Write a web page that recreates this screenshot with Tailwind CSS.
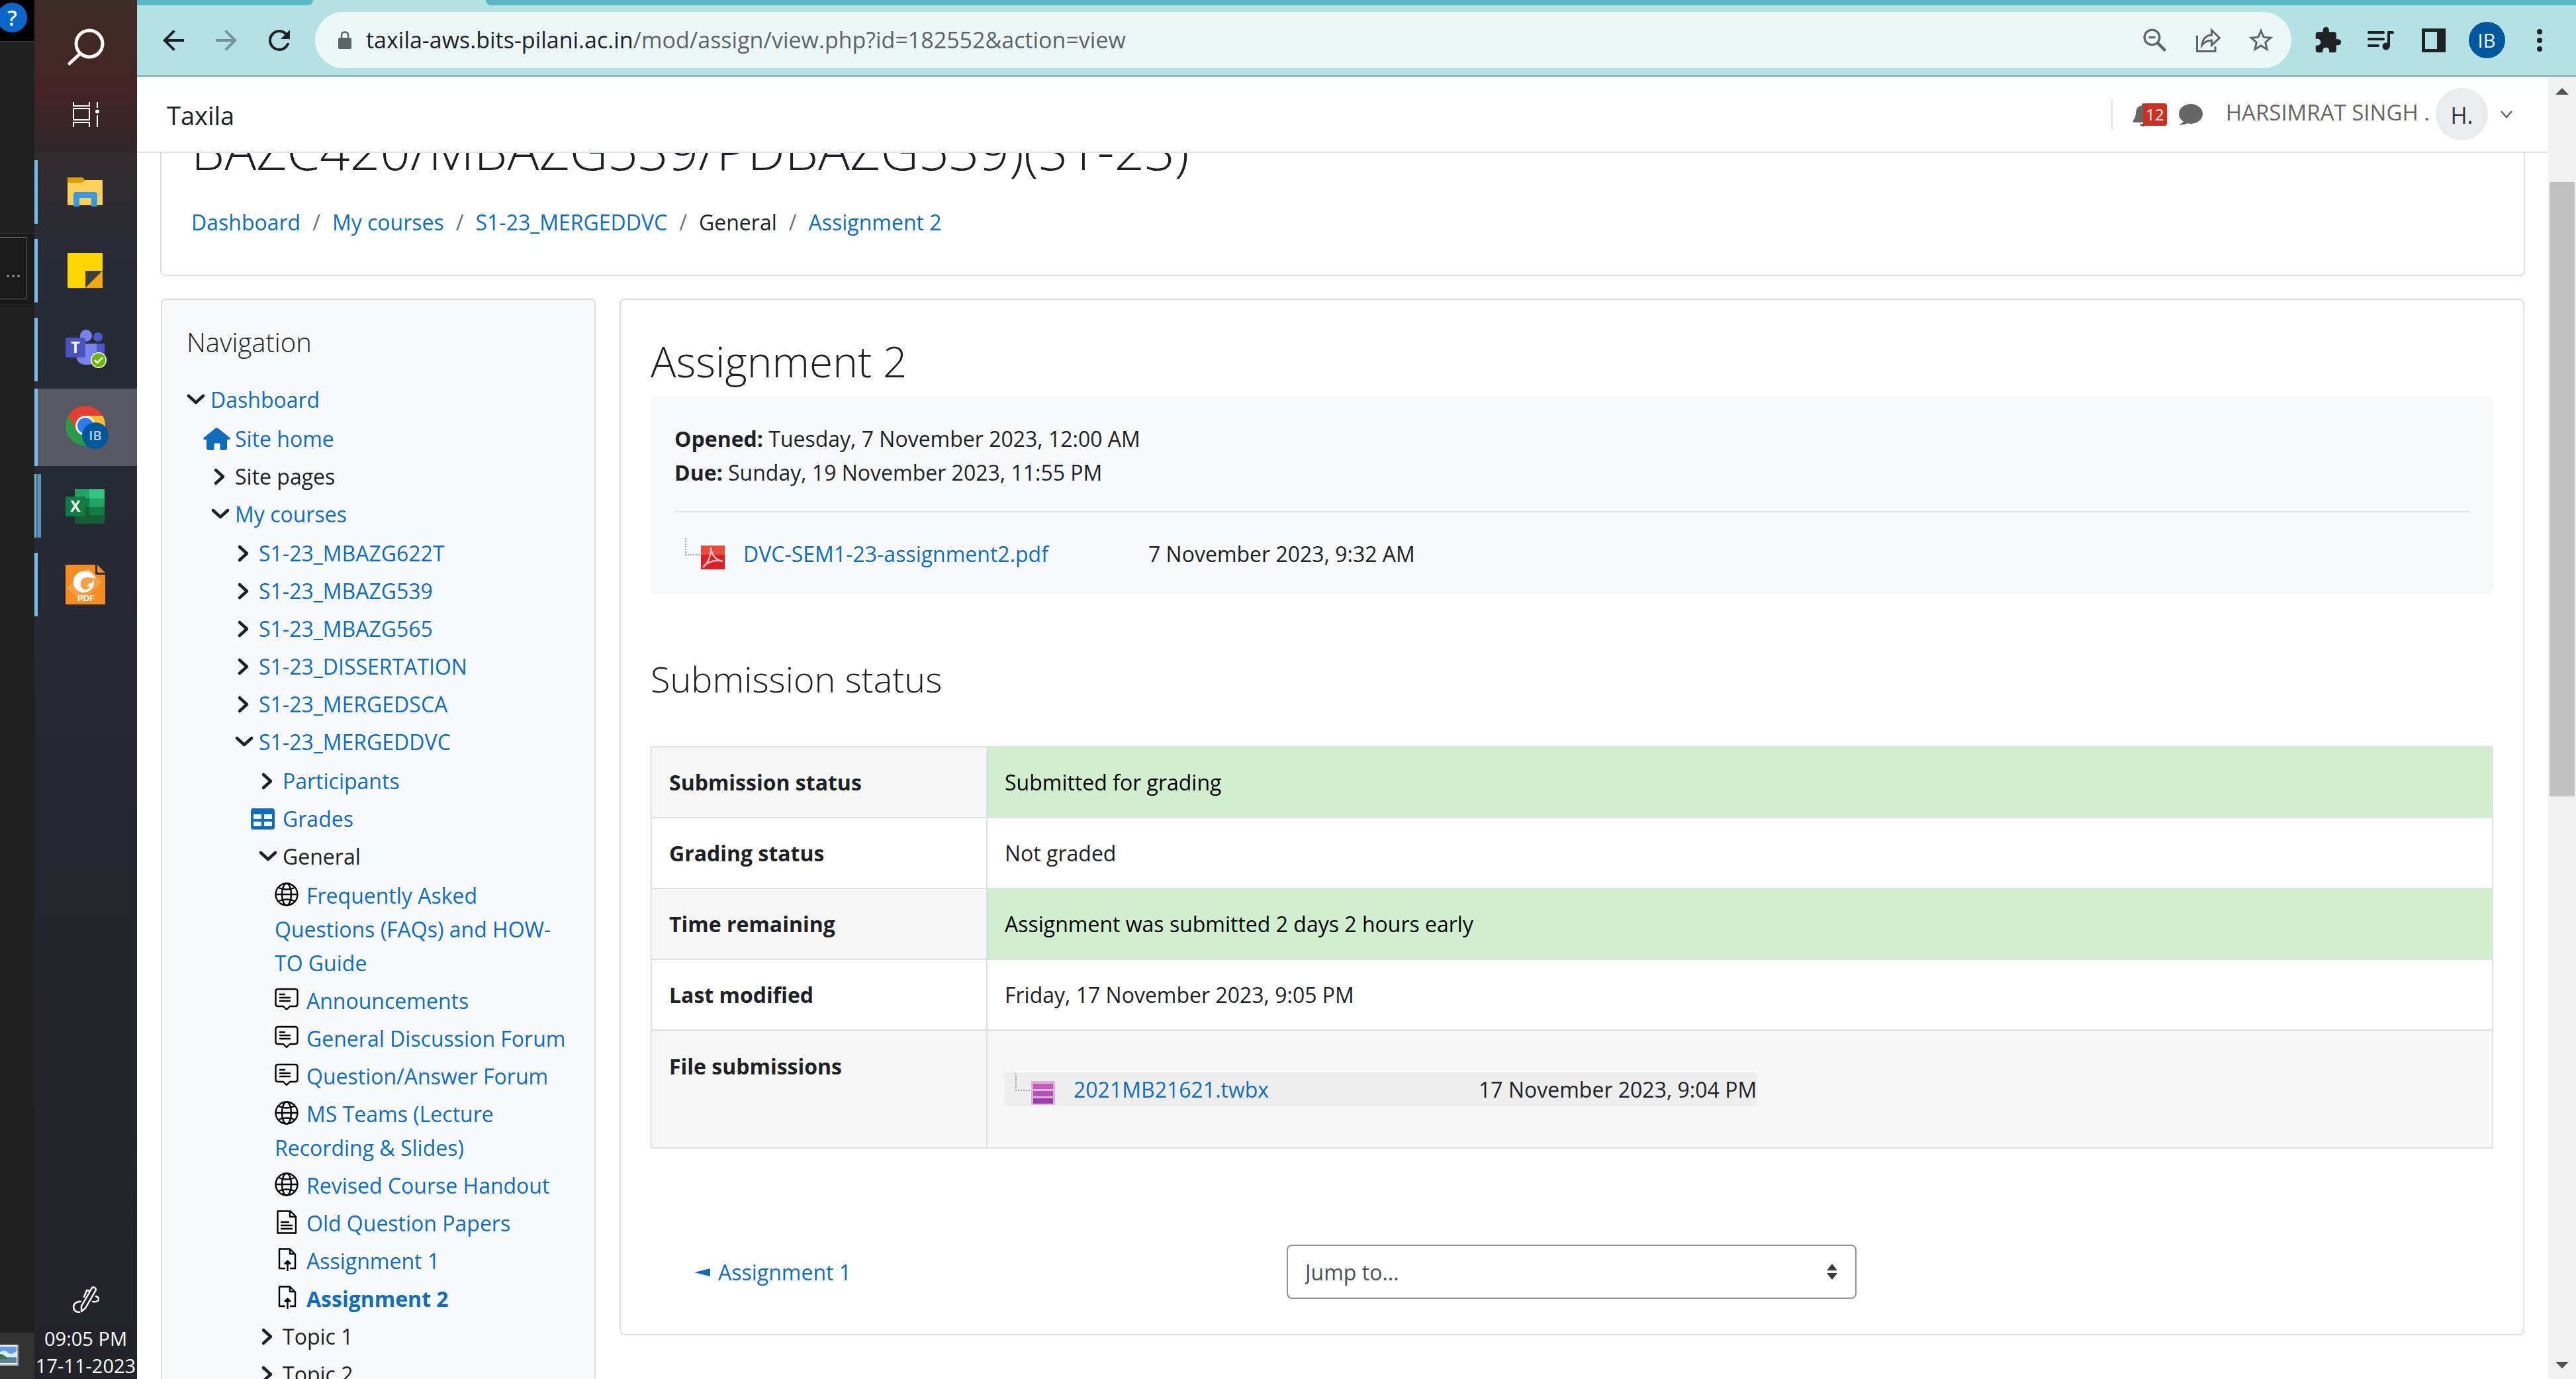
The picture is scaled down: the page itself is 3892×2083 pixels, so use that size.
<!DOCTYPE html>
<html lang="en">
<head>
<meta charset="utf-8">
<title>Assignment 2</title>
<script src="https://cdn.jsdelivr.net/npm/@tailwindcss/browser@4"></script>
</head>
<body class="h-screen overflow-hidden bg-white font-['Open_Sans','Noto_Sans',sans-serif] text-[32px] leading-[51px] text-[#1d2125]">
<svg class="hidden" aria-hidden="true">
  <symbol id="down" viewBox="0 0 28 28"><path d="M3 8l11 10L25 8" fill="none" stroke="currentColor" stroke-width="4.500" stroke-linecap="round" stroke-linejoin="round"/></symbol>
  <symbol id="right" viewBox="0 0 28 28"><path d="M7 4l11 10L7 24" fill="none" stroke="currentColor" stroke-width="4.500" stroke-linecap="round" stroke-linejoin="round"/></symbol>
  <symbol id="home" viewBox="0 0 41 36"><path d="M19 1.500q1.500-1.200 3 0L40 16q1.500 1.500 0 3h-4v13q0 3-3 3h-6q-1.500 0-1.500-1.500V26q0-1.500-1.500-1.500h-6q-1.500 0-1.500 1.500v7.500Q16.500 35 15 35H8q-3 0-3-3V19H1q-1.500-1.500 0-3z" fill="currentColor"/></symbol>
  <symbol id="table" viewBox="0 0 36 32"><path fill-rule="evenodd" d="M4 0h28a4 4 0 0 1 4 4v24a4 4 0 0 1-4 4H4a4 4 0 0 1-4-4V4a4 4 0 0 1 4-4zM4 9v7h12V9zM20 9v7h12V9zM4 20v7h12v-7zM20 20v7h12v-7z" fill="currentColor"/></symbol>
  <symbol id="globe" viewBox="0 0 36 36"><g fill="none" stroke="#000" stroke-width="2.400"><circle cx="18" cy="18" r="16.500"/><ellipse cx="18" cy="18" rx="7" ry="16.500"/><path d="M1.500 18h33M6 8q12 5 24 0M6 28q12-5 24 0"/></g></symbol>
  <symbol id="forum" viewBox="0 0 36 36"><g fill="none" stroke="#000" stroke-width="2.400" stroke-linecap="round" stroke-linejoin="round"><path d="M5 2h26q3.500 0 3.500 3.500v19q0 3.500-3.500 3.500h-8l-5 5-5-5H5q-3.500 0-3.500-3.500v-19Q1.500 2 5 2z"/><path d="M8 10h7M8 15h15M8 20h15"/></g></symbol>
  <symbol id="page" viewBox="0 0 36 36"><g fill="none" stroke="#000" stroke-width="2.400" stroke-linejoin="round"><path d="M4.500 1.500H24l8 8v25H4.500zM23 2v8h9"/><path d="M9 18h13M9 23h18M9 28h18"/></g></symbol>
  <symbol id="assign" viewBox="0 0 36 36"><g fill="none" stroke="#000" stroke-width="2.400" stroke-linejoin="round"><path d="M16 31H7V1.500h16l8 8V31h-8M23 1.500V9h8M19.500 35V20"/><path d="M15.500 23.500l4-4 4 4z" fill="#000"/></g></symbol>
</svg>
<div class="flex h-full">
  <!-- edge of the window behind the taskbar -->
  <aside class="flex w-[52px] shrink-0 flex-col overflow-hidden bg-[#202020]">
    <div class="h-[62px] bg-black pt-1"><button aria-label="Help" class="-ml-1 flex size-[45px] items-center justify-center rounded-full bg-[#0a66c8] text-[32px] font-semibold leading-none text-white">?</button></div>
    <div class="h-[290px] border-t border-[#3a3a3a]"></div>
    <div class="h-[107px] border-t border-[#333] bg-[#191919] pt-[5px]"><div class="flex h-[94px] w-10 items-center gap-1 border border-l-0 border-[#666] pl-[10px] pt-6"><i class="size-1 rounded-full bg-[#888]"></i><i class="size-1 rounded-full bg-[#888]"></i><i class="size-1 rounded-full bg-[#888]"></i></div></div>
    <div class="mt-auto h-[70px] bg-[#333] pt-[18px]">
      <svg class="h-8 w-7" viewBox="0 0 28 32"><rect width="28" height="32" fill="#a3a3a8"/><rect width="26" height="29" y="1" fill="#fff"/><rect y="3" width="25" height="25" fill="#5f9bea"/><path d="M0 11q8-4 12 1t13-2v9H0z" fill="#dceefa"/><path d="M0 14q6 1 12 7h13v2H0z" fill="#3f6f47"/><path d="M0 22h25v6H0z" fill="#5d82a0"/></svg>
    </div>
  </aside>
  <!-- taskbar -->
  <nav aria-label="Taskbar" class="flex w-[155px] shrink-0 flex-col bg-linear-to-b from-[#3f2c27] from-0% via-[#272b36] via-20% to-[#23232a] to-100% text-white">
    <button aria-label="Search" class="flex h-[142px] w-full items-center justify-center bg-linear-to-b from-[#3f2c27] to-[#442325]"><svg class="size-14" viewBox="0 0 56 56" fill="none" stroke="#fff" stroke-width="5" stroke-linecap="round"><circle cx="33" cy="23" r="20"/><path d="M19 38L3 53"/></svg></button>
    <button aria-label="Task view" class="flex h-[88px] w-full items-center justify-center bg-linear-to-b from-[#442325] to-[#2e282b] pb-[26px]"><svg class="size-10" viewBox="0 0 40 40" fill="none" stroke="#fff" stroke-width="2"><path d="M1 1v6h24V1M1 11h24v17H1zM1 39v-7h24v7M37 1v9M37 21v18"/><circle cx="37" cy="15.500" r="2" fill="#fff"/></svg></button>
    <button aria-label="File Explorer" class="flex h-[119px] w-full items-center"><i class="h-24 w-[5px] bg-[#76b9ed]"></i><svg class="ml-[42px] h-[60px] w-[60px]" viewBox="0 0 60 60"><path d="M3 8h23l4 5v8H3z" fill="#dd9d04"/><path d="M3 16h22l5-4h25q1 0 1 1v35q0 2-1 2H4q-1 0-1-1z" fill="#ffd05a"/><path d="M12 52V34q0-4 4-4h28q4 0 4 4v18h-9V39H21v13z" fill="#3c97dd"/></svg></button>
    <button aria-label="Sticky Notes" class="flex h-[119px] w-full items-center"><i class="h-24 w-[5px] bg-[#76b9ed]"></i><svg class="ml-[42px] h-[60px] w-[60px]" viewBox="0 0 60 60"><rect x="3" y="3" width="53" height="53" rx="1" fill="#ffd600"/><path d="M30 30h26L30 56z" fill="#3f3f3f"/><path d="M56 31v25H30z" fill="#f7a707"/></svg></button>
    <button aria-label="Teams" class="flex h-[119px] w-full items-center"><i class="h-24 w-[5px] bg-[#76b9ed]"></i><svg class="ml-[42px] h-[62px] w-[64px]" viewBox="0 0 64 62"><circle cx="49" cy="12" r="7" fill="#5059c9"/><path d="M42 22h17v17q0 10-10 10z" fill="#5059c9"/><circle cx="31" cy="10" r="9" fill="#7b83eb"/><path d="M16 22h31v18q0 14-15 14T16 40z" fill="#7b83eb"/><rect y="13" width="30" height="30" rx="2" fill="#4b53bc"/><text x="15" y="36" text-anchor="middle" font-family="Open Sans" font-size="23" font-weight="700" fill="#fff">T</text><circle cx="50" cy="47" r="12" fill="#fff"/><circle cx="50" cy="47" r="10.500" fill="#6bb700"/><path d="M44 47l4 4 8-8" fill="none" stroke="#fff" stroke-width="3"/></svg></button>
    <button aria-label="Chrome" class="flex h-[117px] w-full items-center bg-[#565961]"><i class="h-full w-[5px] bg-[#76b9ed]"></i><svg class="ml-[42px] h-[66px] w-[66px]" viewBox="0 0 66 66"><circle cx="30" cy="30" r="30" fill="#2b9a48"/><path d="M4 15A30 30 0 0 1 56 15H30L17 38z" fill="#e53d30"/><path d="M30 15h26a30 30 0 0 1-26 45l13-23z" fill="#fbc02d"/><circle cx="30" cy="30" r="15" fill="#fff"/><circle cx="30" cy="30" r="12" fill="#317bf0"/><circle cx="45" cy="45" r="20" fill="#01579b"/><text x="45" y="52" text-anchor="middle" font-family="Open Sans" font-size="20" font-weight="600" fill="#b9d0e6">IB</text></svg></button>
    <button aria-label="Excel" class="flex h-[119px] w-full items-center"><i class="h-24 w-[2px] bg-[#76b9ed]"></i><i class="h-24 w-[3px] bg-[#4d7493]"></i><i class="h-24 w-[5px] bg-[#5c91bb]"></i><svg class="ml-[37px] h-[60px] w-[60px]" viewBox="0 0 60 60"><path d="M14 5h22v14H14z" fill="#21a366"/><path d="M36 5h22q1 0 1 1v13H36z" fill="#33c481"/><path d="M14 19h22v13H14z" fill="#107c41"/><path d="M36 19h23v13H36z" fill="#21a366"/><path d="M36 32h23v12H36z" fill="#107c41"/><path d="M14 32h22v12h23v12q0 1-1 1H15q-1 0-1-1z" fill="#185c37"/><rect y="16" width="30" height="30" rx="2" fill="#107c41"/><text x="15" y="39" text-anchor="middle" font-family="Open Sans" font-size="23" font-weight="700" fill="#fff">X</text></svg></button>
    <button aria-label="PDF reader" class="flex h-[119px] w-full items-center"><i class="h-24 w-[5px] bg-[#76b9ed]"></i><svg class="ml-[42px] h-[60px] w-[60px]" viewBox="0 0 60 60"><path d="M1 0h44v12q0 3 3 3h12v44q0 1-1 1H1q-1 0-1-1V1q0-1 1-1zM48 0l12 12H50q-2 0-2-2z" fill="#f68b1f"/><path d="M2 35L34 5l21 21-31 31z" fill="#f99e45"/><path d="M46 21Q38 6 26 10A16 16 0 1 0 43 30V22l-4 6h-3q-2 4-6 3 4 3 7 1-3 8-10 5-6-4-4-11 3-11 23-5z" fill="#fff"/><text x="31" y="55" text-anchor="middle" font-family="Liberation Sans" font-size="13" font-weight="700" fill="#fff">PDF</text></svg></button>
    <div class="mt-auto flex flex-col items-center text-[29px] leading-[41px]">
      <svg class="mb-[18px] size-10" viewBox="0 0 40 40" fill="none" stroke="#fff" stroke-width="2.500" stroke-linejoin="round" stroke-linecap="round"><path d="M13 38v-8L28 4q2-4 5-2t1 5L19 33zM26 7L21 6l-4 10M12 23H9q-8 2-8 9 1 7 9 7M35 15q5 2 4 5-1 4-9 3"/></svg>
      <time>09:05 PM</time><time>17-11-2023</time>
    </div>
  </nav>

  <div class="flex min-w-0 flex-1 flex-col">
    <!-- browser chrome -->
    <div class="flex h-2 shrink-0 bg-[#b4e1e4]"><i class="w-[266px] rounded-br-lg bg-[#5bb8c1]"></i><i class="ml-[261px] flex-1 rounded-bl-lg bg-[#5bb8c1]"></i></div>
    <div class="flex h-[108px] shrink-0 items-center border-b-[3px] border-[#92b5ba] bg-[#b4e1e4] px-[15px] text-[#202124]">
      <button aria-label="Back" class="flex w-20 justify-center"><svg class="size-12" viewBox="0 0 24 24"><path d="M20 11H7.800l5.600-5.600L12 4l-8 8 8 8 1.400-1.400L7.800 13H20z" fill="currentColor"/></svg></button>
      <button aria-label="Forward" class="flex w-20 justify-center text-[#75959a]"><svg class="size-12" viewBox="0 0 24 24"><path d="M4 13h12.200l-5.600 5.600L12 20l8-8-8-8-1.400 1.400 5.600 5.600H4z" fill="currentColor"/></svg></button>
      <button aria-label="Reload" class="flex w-20 justify-center"><svg class="size-12" viewBox="0 0 24 24"><path d="M17.650 6.350A8 8 0 1 0 19.730 14h-2.080A6 6 0 1 1 16.220 7.780L13 11h7V4z" fill="currentColor"/></svg></button>
      <div class="ml-[14px] flex h-[85px] min-w-0 flex-1 items-center rounded-full bg-[#ecf8f8] pl-[35px] pr-[6px] text-[#5f6368]">
        <svg class="h-7 w-5 shrink-0" viewBox="0 0 20 28"><rect y="10" width="20" height="17" rx="2" fill="currentColor"/><path d="M5 11V6q0-4.500 5-4.500T15 6v5" fill="none" stroke="currentColor" stroke-width="2.500"/></svg>
        <div role="textbox" aria-label="Address" class="ml-[22px] flex-1 truncate text-[34px]"><span class="text-[#202124]">taxila-aws.bits-pilani.ac.in</span>/mod/assign/view.php?id=182552&amp;action=view</div>
        <button aria-label="Zoom" class="flex w-20 justify-center"><svg class="size-11" viewBox="0 0 24 24" fill="none" stroke="currentColor" stroke-width="1.800"><circle cx="9.500" cy="9.500" r="6.200"/><path d="M14 14l6.500 6.500" stroke-width="2.400"/><path d="M6.800 9.500h5.400"/></svg></button>
        <button aria-label="Share" class="flex w-20 justify-center"><svg class="size-11" viewBox="0 0 24 24" fill="none" stroke="currentColor" stroke-width="1.600"><path d="M3 8v13h15v-4M7 16q1-8 8-8.500V3.500l6.500 6.500-6.500 6v-4q-5 0-8 4z"/></svg></button>
        <button aria-label="Bookmark" class="flex w-20 justify-center"><svg class="size-11" viewBox="0 0 24 24"><path d="M22 9.240l-7.190-.62L12 2 9.190 8.630 2 9.240l5.460 4.730L5.820 21 12 17.270 18.180 21l-1.630-7.030zM12 15.400l-3.760 2.270 1-4.280-3.320-2.880 4.380-.38L12 6.100l1.710 4.040 4.380.38-3.320 2.880 1 4.280z" fill="currentColor"/></svg></button>
      </div>
      <button aria-label="Extensions" class="ml-[15px] flex w-20 justify-center"><svg class="size-11" viewBox="0 0 24 24"><path d="M20.500 11H19V7a2 2 0 0 0-2-2h-4V3.500a2.500 2.500 0 0 0-5 0V5H4a2 2 0 0 0-2 2v3.800h1.500a2.700 2.700 0 0 1 0 5.400H2V20c0 1.100.9 2 2 2h3.800v-1.500a2.700 2.700 0 0 1 5.400 0V22H17a2 2 0 0 0 2-2v-4h1.500a2.500 2.500 0 0 0 0-5z" fill="currentColor"/></svg></button>
      <button aria-label="Media" class="flex w-20 justify-center"><svg class="h-8 w-10" viewBox="0 0 40 32" fill="none" stroke="currentColor" stroke-width="4" stroke-linecap="round"><path d="M2 4h22M2 14h22M2 24h14M38 4h-6v20"/><circle cx="28" cy="25" r="5.500" fill="currentColor" stroke="none"/></svg></button>
      <button aria-label="Side panel" class="flex w-20 justify-center"><svg class="size-9" viewBox="0 0 36 36"><path fill-rule="evenodd" d="M0 0h36v36H0zM5 5v26h18V5z" fill="currentColor"/></svg></button>
      <button aria-label="Profile" class="flex w-20 justify-center"><span class="flex size-[55px] items-center justify-center rounded-full bg-[#01579b] text-[29px] text-white">IB</span></button>
      <button aria-label="Menu" class="flex w-20 justify-center"><svg class="h-9 w-2" viewBox="0 0 8 36" fill="currentColor"><circle cx="4" cy="5" r="4"/><circle cx="4" cy="18" r="4"/><circle cx="4" cy="31" r="4"/></svg></button>
    </div>

    <div class="flex min-h-0 flex-1">
      <div class="flex min-w-0 flex-1 flex-col">
        <!-- site header -->
        <header class="flex h-[115px] shrink-0 items-center border-b-2 border-[#dee2e6] pl-[45px] pr-[54px] text-[#666]">
          <a href="#" class="pt-1 text-[38px] text-[#1d2125]">Taxila</a>
          <div class="ml-auto flex h-[46px] items-center border-l-2 border-[#dee2e6] pl-[30px]">
            <button aria-label="Notifications" class="relative flex w-[52px]"><svg class="h-9 w-8" viewBox="0 0 32 36" fill="currentColor"><path d="M16 1q2 0 2 3 8 2 9 10 0 8 4 13 1 3-2 3H3q-3 0-2-3 4-5 4-13 1-8 9-10 0-3 2-3zM11 32h10q-1 4-5 4t-5-4z"/></svg><span class="absolute left-4 top-[1px] flex h-[34px] w-9 items-center justify-center rounded bg-[#ca3120] text-[24px] leading-none text-white">12</span></button>
            <button aria-label="Messages" class="ml-[17px] flex"><svg class="h-8 w-[37px]" viewBox="0 0 37 32" fill="currentColor"><ellipse cx="19" cy="15" rx="18" ry="15"/><path d="M3 18l5 8q-2 4-7 5 5 2 16-3z"/></svg></button>
            <button class="ml-[35px] flex items-center"><span class="mb-[6px] text-[33px]">HARSIMRAT SINGH .</span><span class="ml-[9px] flex size-[79px] items-center justify-center rounded-full bg-[#e9ecef] pt-1 text-[34px] text-[#343a40]">H.</span><svg class="ml-[19px] h-3 w-[18px]" viewBox="0 0 18 12" fill="none" stroke="currentColor" stroke-width="2.500"><path d="M1 1l8 9 8-9"/></svg></button>
          </div>
        </header>
        <!-- scrolled page -->
        <div class="min-h-0 flex-1 overflow-hidden pl-[35px] pr-[35px]">
          <div class="flow-root h-[186px] rounded-b-lg border-2 border-t-0 border-[#dedede] px-[45px]">
            <h1 class="-mt-[45px] text-[80px] font-light leading-[80px]">BAZC420/MBAZG539/PDBAZG539)(S1-23)</h1>
            <nav aria-label="Breadcrumb" class="mt-[44px] flex text-[#6a737b]">
              <a href="#" class="text-[#0f6cbf]">Dashboard</a><span class="mx-[18px]">/</span><a href="#" class="text-[#0f6cbf]">My courses</a><span class="mx-[18px]">/</span><a href="#" class="text-[#0f6cbf]">S1-23_MERGEDDVC</a><span class="mx-[18px]">/</span><span class="text-[#1d2125]">General</span><span class="mx-[18px]">/</span><a href="#" class="text-[#0f6cbf]">Assignment 2</a>
            </nav>
          </div>
          <div class="flex items-start px-px pt-[34px]">
            <aside class="w-[657px] shrink-0 rounded-t-lg border-2 border-b-0 border-[#dedede] bg-[#f8f9fa] px-[37px] pb-[51px] pt-[36px]">
              <h2 class="text-[40px] font-light leading-[56px]">Navigation</h2>
              <ul class="mt-[33px] flex flex-col gap-[6px] whitespace-nowrap text-[#0f6cbf]">
                <li><div class="flex items-center"><svg class="mr-2 size-7 text-[#1d2125]"><use href="#down"/></svg><a href="#">Dashboard</a></div>
                <ul class="flex flex-col gap-[6px] pl-[37px] pt-2">
                  <li class="flex items-center"><svg class="-ml-3 mr-[7px] h-9 w-[41px]"><use href="#home"/></svg><a href="#">Site home</a></li>
                  <li class="flex items-center text-[#1d2125]"><svg class="mr-2 size-7"><use href="#right"/></svg>Site pages</li>
                  <li><div class="flex items-center"><svg class="mr-2 size-7 text-[#1d2125]"><use href="#down"/></svg><a href="#">My courses</a></div>
                  <ul class="flex flex-col gap-[6px] pl-9 pt-2">
                    <li class="flex items-center"><svg class="mr-2 size-7 text-[#1d2125]"><use href="#right"/></svg><a href="#">S1-23_MBAZG622T</a></li>
                    <li class="flex items-center"><svg class="mr-2 size-7 text-[#1d2125]"><use href="#right"/></svg><a href="#">S1-23_MBAZG539</a></li>
                    <li class="flex items-center"><svg class="mr-2 size-7 text-[#1d2125]"><use href="#right"/></svg><a href="#">S1-23_MBAZG565</a></li>
                    <li class="flex items-center"><svg class="mr-2 size-7 text-[#1d2125]"><use href="#right"/></svg><a href="#">S1-23_DISSERTATION</a></li>
                    <li class="flex items-center"><svg class="mr-2 size-7 text-[#1d2125]"><use href="#right"/></svg><a href="#">S1-23_MERGEDSCA</a></li>
                    <li><div class="flex items-center"><svg class="mr-2 size-7 text-[#1d2125]"><use href="#down"/></svg><a href="#">S1-23_MERGEDDVC</a></div>
                    <ul class="flex flex-col gap-[6px] pl-9 pt-2">
                      <li class="flex items-center"><svg class="mr-2 size-7 text-[#1d2125]"><use href="#right"/></svg><a href="#">Participants</a></li>
                      <li class="flex items-center"><svg class="-ml-3 mr-3 h-8 w-9"><use href="#table"/></svg><a href="#">Grades</a></li>
                      <li><div class="flex items-center text-[#1d2125]"><svg class="mr-2 size-7"><use href="#down"/></svg>General</div>
                      <ul class="flex flex-col gap-[6px] whitespace-normal pl-6 pt-2">
                        <li><a href="#"><svg class="mr-3 inline size-9 align-[-4px]"><use href="#globe"/></svg>Frequently Asked Questions (FAQs) and HOW-TO Guide</a></li>
                        <li><a href="#"><svg class="mr-3 inline size-9 align-[-4px]"><use href="#forum"/></svg>Announcements</a></li>
                        <li class="whitespace-nowrap"><a href="#"><svg class="mr-3 inline size-9 align-[-4px]"><use href="#forum"/></svg>General Discussion Forum</a></li>
                        <li><a href="#"><svg class="mr-3 inline size-9 align-[-4px]"><use href="#forum"/></svg>Question/Answer Forum</a></li>
                        <li><a href="#"><svg class="mr-3 inline size-9 align-[-4px]"><use href="#globe"/></svg>MS Teams (Lecture Recording &amp; Slides)</a></li>
                        <li><a href="#"><svg class="mr-3 inline size-9 align-[-4px]"><use href="#globe"/></svg>Revised Course Handout</a></li>
                        <li><a href="#"><svg class="mr-3 inline size-9 align-[-4px]"><use href="#page"/></svg>Old Question Papers</a></li>
                        <li><a href="#"><svg class="mr-3 inline size-9 align-[-4px]"><use href="#assign"/></svg>Assignment 1</a></li>
                        <li><a href="#" class="font-bold"><svg class="mr-3 inline size-9 align-[-4px]"><use href="#assign"/></svg>Assignment 2</a></li>
                      </ul></li>
                      <li class="flex items-center text-[#1d2125]"><svg class="mr-2 size-7"><use href="#right"/></svg>Topic 1</li>
                      <li class="flex items-center text-[#1d2125]"><svg class="mr-2 size-7"><use href="#right"/></svg>Topic 2</li>
                    </ul></li>
                  </ul></li>
                </ul></li>
              </ul>
            </aside>
            <main class="ml-[36px] min-w-0 flex-1 rounded-lg border-2 border-[#dedede] px-[45px] pb-[53px] pt-[43px]">
              <h2 class="text-[64px] font-light leading-[100px]">Assignment 2</h2>
              <section class="mt-[3px] rounded-lg bg-[#f8f9fa] px-9 pb-9 pt-[38px]">
                <div><strong>Opened:</strong> Tuesday, 7 November 2023, 12:00 AM</div>
                <div><strong>Due:</strong> Sunday, 19 November 2023, 11:55 PM</div>
                <hr class="mt-[33px] border-t-2 border-[#dee2e6]">
                <div class="mt-[37px] flex h-[51px] items-center">
                  <svg class="ml-4 h-12 w-[60px]" viewBox="0 0 60 48"><path d="M1 0v25h23" fill="none" stroke="#999" stroke-width="2" stroke-dasharray="2 2"/><rect x="24" y="11" width="36" height="36" fill="#d8202a"/><path d="M24 11h36v14H24z" fill="#ea4a3c"/><path d="M27 44q12-10 12-30 2 18 18 21-14-4-28 6" fill="none" stroke="#f6b5b5" stroke-width="2.500"/></svg>
                  <a href="#" class="ml-7 w-[612px] text-[#0f6cbf]">DVC-SEM1-23-assignment2.pdf</a><span>7 November 2023, 9:32 AM</span>
                </div>
              </section>
              <h3 class="mt-[83px] text-[54px] font-light leading-[88px]">Submission status</h3>
              <table class="mt-[58px] w-full border-collapse border-2 border-[#dee2e6] text-left align-top">
                <tbody>
                  <tr class="h-[107px] border-b-2 border-[#dee2e6] bg-[#f7f7f7]"><th scope="row" class="w-[507px] border-r-2 border-[#dee2e6] pl-[26px] font-bold">Submission status</th><td class="bg-[#cfefcf] pl-[26px] text-black">Submitted for grading</td></tr>
                  <tr class="h-[107px] border-b-2 border-[#dee2e6]"><th scope="row" class="border-r-2 border-[#dee2e6] pl-[26px] font-bold">Grading status</th><td class="pl-[26px]">Not graded</td></tr>
                  <tr class="h-[107px] border-b-2 border-[#dee2e6] bg-[#f7f7f7]"><th scope="row" class="border-r-2 border-[#dee2e6] pl-[26px] font-bold">Time remaining</th><td class="bg-[#cfefcf] pl-[26px] text-black">Assignment was submitted 2 days 2 hours early</td></tr>
                  <tr class="h-[107px] border-b-2 border-[#dee2e6]"><th scope="row" class="border-r-2 border-[#dee2e6] pl-[26px] font-bold">Last modified</th><td class="pl-[26px]">Friday, 17 November 2023, 9:05 PM</td></tr>
                  <tr class="h-[178px] bg-[#f7f7f7]"><th scope="row" class="border-r-2 border-[#dee2e6] pl-[26px] pt-7 align-top font-bold">File submissions</th>
                    <td class="pl-[26px] pt-[63px] align-top"><div class="inline-flex h-[51px] items-center bg-[#eee]">
                      <svg class="ml-4 h-12 w-[60px]" viewBox="0 0 60 48"><path d="M1 0v25h23" fill="none" stroke="#999" stroke-width="2" stroke-dasharray="2 2"/><rect x="24" y="11" width="36" height="36" rx="2" fill="#dcaee0"/><path d="M27 15h30v8H27z" fill="#c45cbc"/><path d="M27 26h30v8H27z" fill="#b44fb6"/><path d="M27 37h30v8H27z" fill="#9a3fa6"/></svg>
                      <a href="#" class="ml-7 w-[612px] text-[#0f6cbf]">2021MB21621.twbx</a><span>17 November 2023, 9:04 PM</span></div></td></tr>
                </tbody>
              </table>
              <div class="mt-[145px] grid grid-cols-[961px_861px] items-center">
                <a href="#" class="pl-[66px] text-[#0f6cbf]"><svg class="mr-3 inline h-3 w-6 align-[6px]" viewBox="0 0 24 12"><path d="M0 6L24 0v12z" fill="currentColor"/></svg>Assignment 1</a>
                <div class="relative"><select aria-label="Jump to" class="h-[82px] w-full appearance-none rounded-lg border-2 border-[#8f959e] bg-white pl-[26px] text-[#495057]"><option>Jump to...</option></select>
                <svg class="pointer-events-none absolute right-[29px] top-[29px] h-6 w-4" viewBox="0 0 16 24" fill="#343a40"><path d="M8 0l8 10H0zM8 24l8-10H0z"/></svg></div>
              </div>
            </main>
          </div>
        </div>
      </div>
      <!-- page scrollbar -->
      <div class="flex w-[42px] shrink-0 flex-col items-center bg-[#f1f1f1] pb-4 pt-[17px]">
        <svg class="h-[10px] w-5" viewBox="0 0 20 10" fill="#505050"><path d="M0 10L10 0l10 10z"/></svg>
        <div class="mt-[132px] h-[48%] w-[38px] bg-[#c1c1c1]"></div>
        <svg class="mt-auto h-[10px] w-5" viewBox="0 0 20 10" fill="#505050"><path d="M0 0l10 10L20 0z"/></svg>
      </div>
    </div>
  </div>
</div>
</body>
</html>
